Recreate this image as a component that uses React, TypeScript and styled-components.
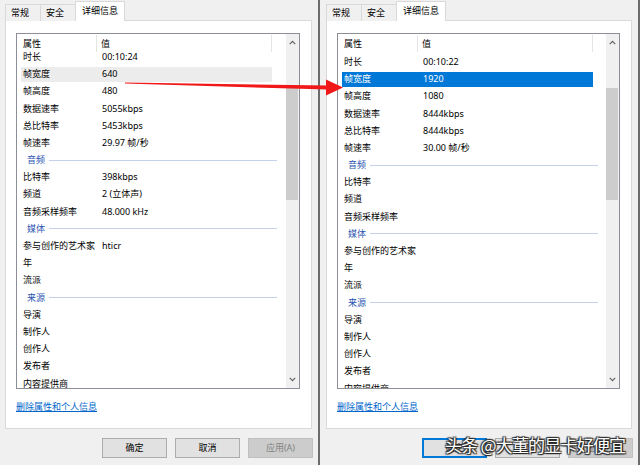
import React from 'react';
import styled, { createGlobalStyle } from 'styled-components';

const Global = createGlobalStyle`
  html, body { margin: 0; padding: 0; background: #f0f0f0; }
  body {
    width: 640px; height: 465px; overflow: hidden;
    font-family: "Noto Sans", "Noto Sans CJK SC", sans-serif;
    font-size: 9px; line-height: 12px; color: #000;
  }
`;

const Stage = styled.div`
  position: relative;
  display: flex;
  width: 640px;
  height: 465px;
  overflow: hidden;
`;

const Window = styled.div<{ $pl: number; $pr: number }>`
  box-sizing: border-box;
  width: 318px;
  height: 465px;
  flex: none;
  display: flex;
  flex-direction: column;
  background: #f0f0f0;
  padding: 0 ${(p) => p.$pr}px 0 ${(p) => p.$pl}px;
`;

const Divider = styled.div`
  width: 2px;
  height: 465px;
  flex: none;
  background: #6b6b6b;
`;

const TabRow = styled.div`
  display: flex;
  align-items: flex-end;
  height: 21px;
  flex: none;
  position: relative;
  z-index: 1;
`;

const Tab = styled.div<{ $active?: boolean }>`
  box-sizing: border-box;
  display: flex;
  align-items: center;
  white-space: nowrap;
  height: ${(p) => (p.$active ? 20 : 17)}px;
  padding: ${(p) => (p.$active ? '0 6px 1px 6px' : '0 11px 0 5px')};
  background: ${(p) => (p.$active ? '#ffffff' : '#f0f0f0')};
  border: 1px solid #d9d9d9;
  border-bottom: none;
  & + & { margin-left: -1px; }
`;

const Panel = styled.div`
  box-sizing: border-box;
  height: 409px;
  flex: none;
  margin-top: -1px;
  background: #ffffff;
  border: 1px solid #d9d9d9;
  display: flex;
  flex-direction: column;
  padding: 12px 11px 0 10px;
`;

const ListBox = styled.div`
  box-sizing: border-box;
  height: 356px;
  flex: none;
  border: 1px solid #8c8f96;
  background: #ffffff;
  display: flex;
`;

const ListMain = styled.div`
  flex: 1;
  min-width: 0;
  display: flex;
  flex-direction: column;
  overflow: hidden;
`;

const Header = styled.div`
  display: flex;
  height: 19.4px;
  flex: none;
`;

const HeadCell = styled.div<{ $w: number; $pl: number }>`
  box-sizing: border-box;
  width: ${(p) => p.$w}px;
  flex: none;
  padding-left: ${(p) => p.$pl}px;
  display: flex;
  align-items: center;
  border-right: 1px solid #e5e5e5;
  margin: 1px 0;
`;

const Body = styled.div<{ $offset: number }>`
  flex: 1;
  margin-top: ${(p) => -p.$offset}px;
`;

const Row = styled.div<{ $state?: 'hover' | 'selected' }>`
  box-sizing: border-box;
  display: flex;
  align-items: center;
  height: 17.2px;
  width: 251px;
  margin-left: 4px;
  padding-left: 2px;
  white-space: nowrap;
  border-top: 1px solid transparent;
  border-bottom: 1px solid transparent;
  background-clip: padding-box;
  background-color: ${(p) =>
    p.$state === 'hover' ? '#ececec' : p.$state === 'selected' ? '#0078d7' : 'transparent'};
  color: ${(p) => (p.$state === 'selected' ? '#ffffff' : '#000000')};
`;

const NameCell = styled.div`
  width: 79px;
  flex: none;
  overflow: hidden;
`;

const ValueCell = styled.div``;

const GroupRow = styled.div`
  box-sizing: border-box;
  display: flex;
  align-items: center;
  gap: 4px;
  height: 17.2px;
  width: 256px;
  margin-left: 4px;
  padding-left: 6px;
  color: #2b55b0;
  white-space: nowrap;
`;

const GroupLine = styled.div`
  flex: 1;
  height: 1px;
  background: #c4d1ea;
`;

const ScrollBar = styled.div`
  width: 13px;
  flex: none;
  background: #f0f0f0;
  display: flex;
  flex-direction: column;
`;

const ScrollBtn = styled.div`
  height: 17px;
  flex: none;
  display: flex;
  align-items: center;
  justify-content: center;
`;

const Track = styled.div`
  flex: 1;
`;

const Thumb = styled.div`
  margin-top: 37px;
  height: 112px;
  margin-right: 1px;
  background: #cdcdcd;
`;

const Link = styled.a`
  align-self: flex-start;
  margin-top: 12px;
  color: #0066cc;
  text-decoration: underline;
  cursor: pointer;
`;

const ButtonRow = styled.div`
  display: flex;
  justify-content: flex-end;
  gap: 8px;
  margin-top: 9px;
  margin-right: -1px;
`;

const Button = styled.div<{ $disabled?: boolean; $focus?: boolean }>`
  box-sizing: border-box;
  width: 65px;
  height: 20px;
  display: flex;
  align-items: center;
  justify-content: center;
  background: ${(p) => (p.$disabled ? '#cccccc' : '#e1e1e1')};
  border: 1px solid ${(p) => (p.$disabled ? '#bfbfbf' : p.$focus ? '#0078d7' : '#adadad')};
  box-shadow: ${(p) => (p.$focus ? 'inset 0 0 0 1px #0078d7' : 'none')};
  color: ${(p) => (p.$disabled ? '#838383' : '#000000')};
`;

const Watermark = styled.div`
  position: absolute;
  left: 445px;
  top: 434px;
  font-family: "Noto Sans CJK SC", sans-serif;
  font-size: 17px;
  line-height: 21px;
  letter-spacing: -0.8px;
  color: #ffffff;
  white-space: nowrap;
  text-shadow: 0 0 1px #222, 1px 1px 1px #222, -1px -1px 1px #333, 1px -1px 1px #333, -1px 1px 1px #333;
  pointer-events: none;
`;

const Overlay = styled.svg`
  position: absolute;
  left: 0;
  top: 0;
  pointer-events: none;
`;

type Item = { n?: string; v?: string; g?: string; s?: 'hover' | 'selected' };

const leftItems: Item[] = [
  { n: '时长', v: '00:10:24' },
  { n: '帧宽度', v: '640', s: 'hover' },
  { n: '帧高度', v: '480' },
  { n: '数据速率', v: '5055kbps' },
  { n: '总比特率', v: '5453kbps' },
  { n: '帧速率', v: '29.97 帧/秒' },
  { g: '音频' },
  { n: '比特率', v: '398kbps' },
  { n: '频道', v: '2 (立体声)' },
  { n: '音频采样频率', v: '48.000 kHz' },
  { g: '媒体' },
  { n: '参与创作的艺术家', v: 'hticr' },
  { n: '年' },
  { n: '流派' },
  { g: '来源' },
  { n: '导演' },
  { n: '制作人' },
  { n: '创作人' },
  { n: '发布者' },
  { n: '内容提供商' },
  { n: '编码人员' },
];

const rightItems: Item[] = [
  { n: '时长', v: '00:10:22' },
  { n: '帧宽度', v: '1920', s: 'selected' },
  { n: '帧高度', v: '1080' },
  { n: '数据速率', v: '8444kbps' },
  { n: '总比特率', v: '8444kbps' },
  { n: '帧速率', v: '30.00 帧/秒' },
  { g: '音频' },
  { n: '比特率' },
  { n: '频道' },
  { n: '音频采样频率' },
  { g: '媒体' },
  { n: '参与创作的艺术家' },
  { n: '年' },
  { n: '流派' },
  { g: '来源' },
  { n: '导演' },
  { n: '制作人' },
  { n: '创作人' },
  { n: '发布者' },
  { n: '内容提供商' },
  { n: '编码人员' },
];

const Chevron = ({ up }: { up?: boolean }) => (
  <svg width="7" height="5" viewBox="0 0 7 5">
    <path
      d={up ? 'M0.8 4.2 L3.5 1.3 L6.2 4.2' : 'M0.8 0.8 L3.5 3.7 L6.2 0.8'}
      fill="none"
      stroke="#606060"
      strokeWidth="1.1"
    />
  </svg>
);

const Dialog = ({ items, offset, pl, focusOk }: { items: Item[]; offset: number; pl: number; focusOk?: boolean }) => (
  <Window $pl={pl} $pr={6}>
    <TabRow>
      <Tab>常规</Tab>
      <Tab>安全</Tab>
      <Tab $active>详细信息</Tab>
    </TabRow>
    <Panel>
      <ListBox>
        <ListMain>
          <Header>
            <HeadCell $w={80} $pl={6}>属性</HeadCell>
            <HeadCell $w={175} $pl={4}>值</HeadCell>
          </Header>
          <Body $offset={offset}>
            {items.map((it, i) =>
              it.g ? (
                <GroupRow key={i}>
                  <span>{it.g}</span>
                  <GroupLine />
                </GroupRow>
              ) : (
                <Row key={i} $state={it.s}>
                  <NameCell>{it.n}</NameCell>
                  <ValueCell>{it.v}</ValueCell>
                </Row>
              )
            )}
          </Body>
        </ListMain>
        <ScrollBar>
          <ScrollBtn>
            <Chevron up />
          </ScrollBtn>
          <Track>
            <Thumb />
          </Track>
          <ScrollBtn>
            <Chevron />
          </ScrollBtn>
        </ScrollBar>
      </ListBox>
      <Link>删除属性和个人信息</Link>
    </Panel>
    <ButtonRow>
      <Button $focus={focusOk}>确定</Button>
      <Button>取消</Button>
      <Button $disabled>应用(A)</Button>
    </ButtonRow>
  </Window>
);

export default function App() {
  return (
    <>
      <Global />
      <Stage>
        <Dialog items={leftItems} offset={5} pl={5} />
        <Divider />
        <Dialog items={rightItems} offset={0} pl={6} focusOk />
        <Divider />
        <Overlay width="640" height="465" viewBox="0 0 640 465">
          <polygon points="125,82.6 125,83.6 328,89.6 328,85.4" fill="#f01818" />
          <polygon points="326,79.5 343,87.5 326,95.5" fill="#f01818" />
        </Overlay>
        <Watermark>头条 @大董的显卡好便宜</Watermark>
      </Stage>
    </>
  );
}
